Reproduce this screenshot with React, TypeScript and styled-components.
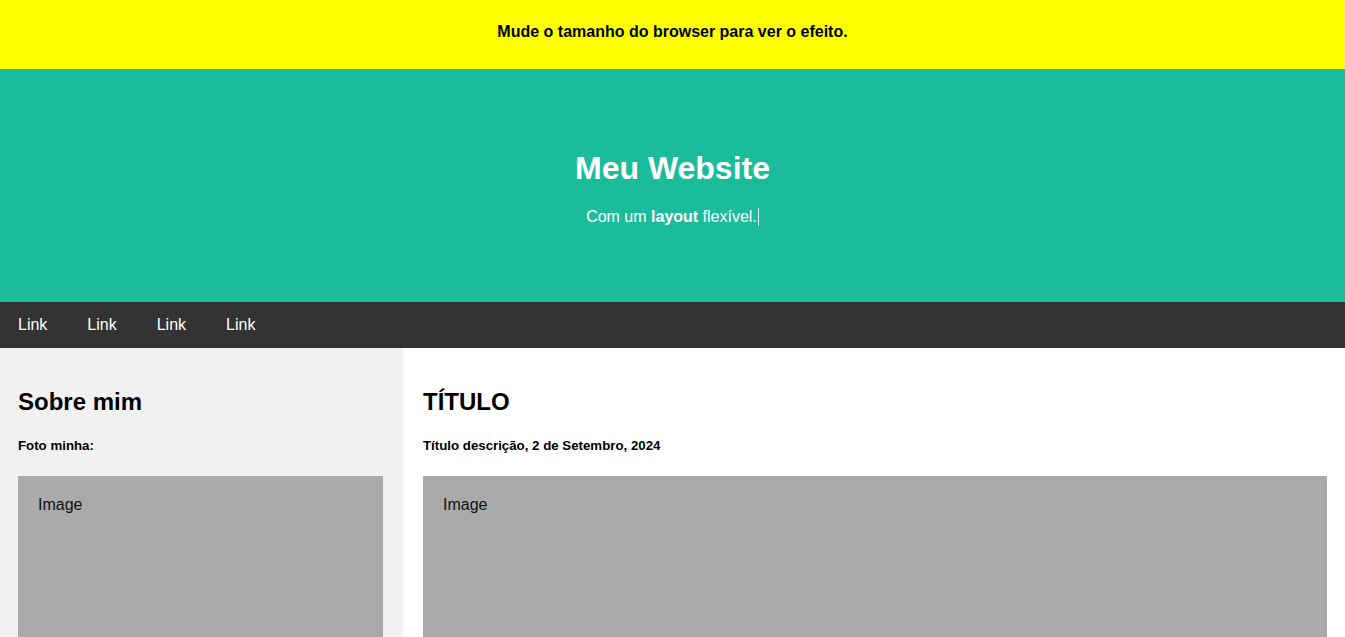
import React from "react";
import styled, { createGlobalStyle } from "styled-components";

const Global = createGlobalStyle`
  * { box-sizing: border-box; }
  html, body { margin: 0; padding: 0; background: #fff; }
  body { font-family: "Liberation Sans", Arial, Helvetica, sans-serif; color: #000; }
`;

const Notice = styled.div`
  background: #ffff00;
  text-align: center;
  padding: 23px 0 28px;
`;

const NoticeText = styled.p`
  margin: 0;
  font-size: 16px;
  line-height: 18px;
  font-weight: bold;
`;

const Header = styled.header`
  background: #1abc9c;
  color: #fff;
  text-align: center;
  padding: 60px;
`;

const Title = styled.h1`
  font-size: 32px;
  margin: 21.44px 0;
  line-height: 36px;
`;

const Subtitle = styled.p`
  font-size: 16px;
  line-height: 18px;
  margin: 16px 0;
`;

const Caret = styled.span`
  display: inline-block;
  width: 1px;
  height: 18px;
  margin-left: 1px;
  vertical-align: -4px;
  background: rgba(255, 255, 255, 0.85);
`;

const Nav = styled.nav`
  display: flex;
  background: #333;
  padding-left: 18px;
  gap: 40px;
`;

const NavLink = styled.a`
  color: #fff;
  text-decoration: none;
  font-size: 16px;
  line-height: 18px;
  padding: 14px 0;
`;

const Row = styled.div`
  display: flex;
`;

const Side = styled.aside`
  flex: 0 0 403px;
  background: #f1f1f1;
  padding: 20px 20px 20px 18px;
`;

const Main = styled.main`
  flex: 1;
  background: #fff;
  padding: 20px 18px 20px 20px;
`;

const SectionTitle = styled.h2`
  font-size: 24px;
  line-height: 27.6px;
  margin: 19.92px 0;
`;

const Caption = styled.h5`
  font-size: 13.28px;
  line-height: 15.3px;
  margin: 22.18px 0 23.18px;
`;

const FakeImg = styled.div<{ $h: number }>`
  background: #aaa;
  width: 100%;
  height: ${(p) => p.$h}px;
  padding: 20px;
  font-size: 16px;
  line-height: 18px;
  color: #111;
`;

export default function App() {
  return (
    <>
      <Global />
      <Notice>
        <NoticeText>Mude o tamanho do browser para ver o efeito.</NoticeText>
      </Notice>
      <Header>
        <Title>Meu Website</Title>
        <Subtitle>
          Com um <b>layout</b> flexível.
          <Caret />
        </Subtitle>
      </Header>
      <Nav>
        <NavLink href="#">Link</NavLink>
        <NavLink href="#">Link</NavLink>
        <NavLink href="#">Link</NavLink>
        <NavLink href="#">Link</NavLink>
      </Nav>
      <Row>
        <Side>
          <SectionTitle>Sobre mim</SectionTitle>
          <Caption>Foto minha:</Caption>
          <FakeImg $h={240}>Image</FakeImg>
        </Side>
        <Main>
          <SectionTitle>TÍTULO</SectionTitle>
          <Caption>Título descrição, 2 de Setembro, 2024</Caption>
          <FakeImg $h={240}>Image</FakeImg>
        </Main>
      </Row>
    </>
  );
}
